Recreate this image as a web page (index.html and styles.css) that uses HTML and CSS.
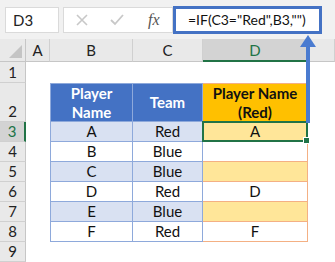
FILE: index.html
```html
<!DOCTYPE html>
<html lang="en">
<head>
    <meta charset="UTF-8">
    <title>IF formula</title>
    <link rel="stylesheet" href="styles.css">
</head>
<body>
<div class="sheet">
    <div class="fbar">
        <div class="namebox">D3</div>
        <div class="fbtns">
            <svg class="btn" width="14" height="14" viewBox="0 0 14 14"><path d="M2 2 L12 12 M12 2 L2 12" stroke="#c8c8c8" stroke-width="1.6" fill="none"/></svg>
            <svg class="btn" width="16" height="14" viewBox="0 0 16 14"><path d="M2 7 L6 11 L14 2" stroke="#c8c8c8" stroke-width="1.8" fill="none"/></svg>
            <span class="fx">fx</span>
        </div>
        <div class="formula">=IF(C3="Red",B3,"")</div>
    </div>
    <div class="grid">
        <div class="corner"><span class="tri"></span></div>
        <div class="ch">A</div>
        <div class="ch">B</div>
        <div class="ch">C</div>
        <div class="ch sel">D</div>
        <div class="ch"></div>

        <div class="rh">1</div><div></div><div></div><div></div><div></div><div></div>

        <div class="rh">2</div><div></div>
        <div class="t th first">Player<br>Name</div>
        <div class="t th">Team</div>
        <div class="d dh">Player Name<br>(Red)</div>
        <div></div>

        <div class="rh sel">3</div><div></div>
        <div class="t band first">A</div><div class="t band">Red</div>
        <div class="d gold active">A</div><div></div>

        <div class="rh">4</div><div></div>
        <div class="t first">B</div><div class="t">Blue</div>
        <div class="d"></div><div></div>

        <div class="rh">5</div><div></div>
        <div class="t band first">C</div><div class="t band">Blue</div>
        <div class="d gold"></div><div></div>

        <div class="rh">6</div><div></div>
        <div class="t first">D</div><div class="t">Red</div>
        <div class="d">D</div><div></div>

        <div class="rh">7</div><div></div>
        <div class="t band first">E</div><div class="t band">Blue</div>
        <div class="d gold"></div><div></div>

        <div class="rh">8</div><div></div>
        <div class="t first">F</div><div class="t">Red</div>
        <div class="d">F</div><div></div>

        <div class="rh">9</div><div></div><div></div><div></div><div></div><div></div>
    </div>
    <svg class="arrow" width="20" height="92" viewBox="0 0 20 92">
        <polygon points="10,2 2,14 18,14" fill="#4a7bd0"/>
        <rect x="8" y="12" width="4" height="78" fill="#4a7bd0"/>
    </svg>
</div>
</body>
</html>
```
FILE: styles.css
```css
* { box-sizing: border-box; }
body { margin:0; background:#fff; font-family: Lato, "Open Sans", sans-serif; }
.sheet { position:relative; width:335px; height:262px; overflow:hidden; }

.fbar { display:flex; align-items:flex-start; height:39px; background:#f1f1f1; padding:6px 0 0 5px; }
.namebox { width:54px; height:26px; margin-top:1px; background:#fff; border:1px solid #dadada; font-size:15px; line-height:24px; padding-left:7px; color:#222; }
.fbtns { display:flex; align-items:center; width:110px; height:26px; margin:1px 0 0 4px; background:#fff; border:1px solid #dadada; padding-left:11px; }
.btn { margin-right:20px; }
.fx { font-family:"Liberation Serif", serif; font-style:italic; font-size:16px; color:#555; margin-left:3px; }
.formula { width:149px; height:28px; border:3px solid #4472c4; background:#fff; font-size:14px; line-height:22px; padding-left:12px; color:#111; white-space:nowrap; }

.grid { display:grid; grid-template-columns:26px 24px 83px 70px 105px 27px; grid-template-rows:23px 21px 39px repeat(7, 20px); font-size:15px; color:#111; }
.corner { background:#e9e9e9; border-right:1px solid #c6c6c6; border-bottom:1px solid #c6c6c6; position:relative; }
.tri { position:absolute; right:3px; bottom:3px; width:0; height:0; border-left:13px solid transparent; border-bottom:13px solid #c4c4c4; }
.ch { background:#e9e9e9; border-right:1px solid #d0d0d0; border-bottom:1px solid #c6c6c6; text-align:center; line-height:22px; color:#222; }
.ch.sel { background:#d3d3d3; border-bottom:2px solid #217346; color:#217346; }
.rh { background:#e9e9e9; border-right:1px solid #c6c6c6; border-bottom:1px solid #d0d0d0; display:flex; align-items:flex-end; justify-content:center; line-height:19px; color:#222; }
.rh.sel { background:#d3d3d3; border-right:2px solid #217346; color:#217346; }

.t { border-right:1px solid #8ea9db; border-bottom:1px solid #8ea9db; text-align:center; line-height:19px; }
.t.first { border-left:1px solid #8ea9db; }
.t.band { background:#d9e1f2; }
.th { background:#4472c4; color:#fff; font-weight:bold; border-top:1px solid #8ea9db; display:flex; align-items:center; justify-content:center; line-height:19px; }
.d { border-right:1px solid #f4b084; border-bottom:1px solid #f4b084; text-align:center; line-height:19px; }
.d.gold { background:#ffe699; }
.dh { background:#ffc000; border-top:1px solid #f4b084; font-weight:bold; display:flex; align-items:center; justify-content:center; line-height:19px; }
.active { position:relative; }
.active::before { content:""; position:absolute; left:-1px; top:-1px; right:-1px; bottom:-1px; border:2px solid #217346; }
.active::after { content:""; position:absolute; right:-3px; bottom:-3px; width:5px; height:5px; background:#217346; border:1px solid #fff; }

.arrow { position:absolute; left:298px; top:33px; }
```
